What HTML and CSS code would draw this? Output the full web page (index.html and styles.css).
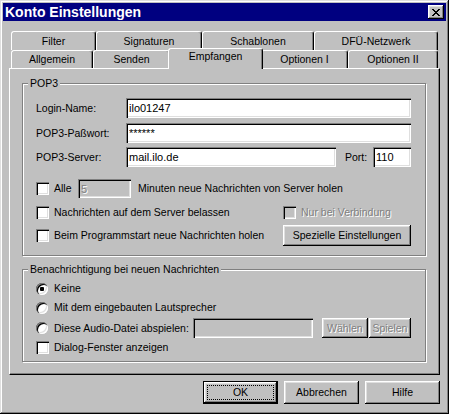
FILE: index.html
```html
<!DOCTYPE html>
<html lang="de">
<head>
  <meta charset="UTF-8" />
  <title>Konto Einstellungen</title>
  <link rel="stylesheet" href="styles.css">
</head>
<body>

  <div class="window">
    <div class="titlebar">
      <span class="title">Konto Einstellungen</span>
      <button type="button" class="close" aria-label="Schließen">
        <svg width="8" height="7" viewBox="0 0 8 7" shape-rendering="crispEdges">
          <rect x="0" y="0" width="2" height="1"/><rect x="6" y="0" width="2" height="1"/>
          <rect x="1" y="1" width="2" height="1"/><rect x="5" y="1" width="2" height="1"/>
          <rect x="2" y="2" width="4" height="1"/>
          <rect x="3" y="3" width="2" height="1"/>
          <rect x="2" y="4" width="4" height="1"/>
          <rect x="1" y="5" width="2" height="1"/><rect x="5" y="5" width="2" height="1"/>
          <rect x="0" y="6" width="2" height="1"/><rect x="6" y="6" width="2" height="1"/>
        </svg>
      </button>
    </div>

    <div class="sheet">
      <div class="tabs">
        <div class="tab-row back">
          <div class="tab tab-filter">Filter</div>
          <div class="tab tab-signaturen">Signaturen</div>
          <div class="tab tab-schablonen">Schablonen</div>
          <div class="tab tab-dfue">DFÜ-Netzwerk</div>
        </div>
        <div class="tab-row front">
          <div class="tab tab-allgemein">Allgemein</div>
          <div class="tab tab-senden">Senden</div>
          <div class="tab tab-empfangen active">Empfangen</div>
          <div class="tab tab-opt1">Optionen I</div>
          <div class="tab tab-opt2">Optionen II</div>
        </div>
      </div>

      <div class="panel">
        <div class="group">
          <div class="group-title">POP3</div>

          <div class="field">
            <label class="field-label" for="login">Login-Name:</label>
            <input class="edit" id="login" type="text" value="ilo01247">
          </div>
          <div class="field">
            <label class="field-label" for="pass">POP3-Paßwort:</label>
            <input class="edit" id="pass" type="text" value="******">
          </div>
          <div class="field field-server">
            <label class="field-label" for="server">POP3-Server:</label>
            <input class="edit edit-server" id="server" type="text" value="mail.ilo.de">
            <label class="port-label" for="port">Port:</label>
            <input class="edit edit-port" id="port" type="text" value="110">
          </div>

          <div class="row row-interval">
            <input type="checkbox" class="check">
            <span class="alle">Alle</span>
            <input class="edit edit-minutes" type="text" value="5" readonly>
            <span class="minutes">Minuten neue Nachrichten von Server holen</span>
          </div>

          <div class="row row-keep">
            <label class="option grow"><input type="checkbox" class="check">Nachrichten auf dem Server belassen</label>
            <label class="option side disabled"><input type="checkbox" class="check">Nur bei Verbindung</label>
          </div>

          <div class="row row-start">
            <label class="option grow"><input type="checkbox" class="check">Beim Programmstart neue Nachrichten holen</label>
            <button type="button" class="btn side">Spezielle Einstellungen</button>
          </div>
        </div>

        <div class="group group-notify">
          <div class="group-title">Benachrichtigung bei neuen Nachrichten</div>

          <label class="option radio-row first"><input type="radio" name="notify" class="radio" checked>Keine</label>
          <label class="option radio-row"><input type="radio" name="notify" class="radio">Mit dem eingebauten Lautsprecher</label>
          <div class="row row-audio">
            <label class="option"><input type="radio" name="notify" class="radio"><span class="audio-text">Diese Audio-Datei abspielen:</span></label>
            <input class="edit edit-audio" type="text" value="">
            <button type="button" class="btn btn-small btn-waehlen disabled">Wählen</button>
            <button type="button" class="btn btn-small btn-spielen disabled">Spielen</button>
          </div>
          <label class="option row-dialog"><input type="checkbox" class="check">Dialog-Fenster anzeigen</label>
        </div>
      </div>

      <div class="actions">
        <button type="button" class="btn btn-action btn-default">OK</button>
        <button type="button" class="btn btn-action">Abbrechen</button>
        <button type="button" class="btn btn-action">Hilfe</button>
      </div>
    </div>
  </div>

</body>
</html>
```

FILE: styles.css
```css
body {
  margin: 0;
  font-family: "Liberation Sans", Arial, sans-serif;
  font-size: 10.5px;
  line-height: 13px;
  color: #000;
  background: #c0c0c0;
}

.window {
  width: 449px;
  height: 414px;
  box-sizing: border-box;
  padding: 3px;
  background: #c0c0c0;
  box-shadow: inset -1px -1px #000, inset 1px 1px #dfdfdf, inset -2px -2px #808080, inset 2px 2px #fff;
}

/* title bar */

.titlebar {
  height: 18px;
  background: #000080;
  display: flex;
  align-items: center;
  justify-content: space-between;
  padding: 0 2px;
}

.title {
  color: #fff;
  font-weight: bold;
  font-size: 14px;
  line-height: 18px;
}

.close {
  width: 16px;
  height: 14px;
  padding: 0;
  border: 0;
  background: #c0c0c0;
  display: flex;
  align-items: center;
  justify-content: center;
  box-shadow: inset -1px -1px #000, inset 1px 1px #fff, inset -2px -2px #808080, inset 2px 2px #dfdfdf;
}

.close svg {
  fill: #000;
  margin-left: -1px;
}

/* tabs */

.sheet {
  margin: 10px 6px 0;
}

.tabs {
  padding-left: 2px;
}

.tab-row {
  display: flex;
  align-items: flex-start;
}

.tab {
  box-sizing: border-box;
  height: 19px;
  border: 1px solid;
  border-bottom: 0;
  border-color: #fff #000 transparent #fff;
  border-radius: 3px 3px 0 0;
  box-shadow: inset -1px 0 #808080;
  background: #c0c0c0;
  display: flex;
  align-items: center;
  justify-content: center;
  white-space: nowrap;
}

.front .tab {
  height: 18px;
}

.front .tab.active {
  height: 21px;
  margin: -2px -2px -1px;
  align-items: flex-start;
  padding-top: 1px;
  position: relative;
  z-index: 1;
}

.tab-filter { width: 85px; }
.tab-signaturen { width: 106px; }
.tab-schablonen { width: 112px; }
.tab-dfue { width: 124px; }

.tab-allgemein { width: 82px; }
.tab-senden { width: 77px; }
.front .tab-empfangen { width: 95px; }
.tab-opt1 { width: 87px; }
.tab-opt2 { width: 90px; }

/* panel */

.panel {
  height: 307px;
  box-sizing: border-box;
  border: 1px solid;
  border-color: #fff #000 #000 #fff;
  box-shadow: inset -1px -1px #808080;
  padding: 14px 13px 0 12px;
}

.group {
  border: 1px solid #808080;
  box-shadow: inset 1px 1px #fff, 1px 1px #fff;
  padding: 0 14px 9px 13px;
}

.group-notify {
  margin-top: 13px;
  padding-bottom: 7px;
}

.group-title {
  width: max-content;
  margin: -7px 0 0 -8px;
  padding: 0 2px;
  background: #c0c0c0;
}

/* fields */

.field {
  display: flex;
  align-items: center;
  height: 20px;
  margin-top: 5px;
}

.group-title + .field {
  margin-top: 8px;
}

.field-server {
  margin-top: 4px;
}

.field-label {
  width: 90px;
  flex: none;
}

.edit {
  flex: 1;
  min-width: 0;
  height: 20px;
  box-sizing: border-box;
  margin: 0;
  padding: 0 3px;
  border: 0;
  outline: none;
  font: inherit;
  font-size: 11px;
  color: #000;
  background: #fff;
  box-shadow: inset 1px 1px #808080, inset 2px 2px #000, inset -1px -1px #fff, inset -2px -2px #dfdfdf;
}

.edit-server {
  flex: none;
  width: 210px;
}

.port-label {
  margin-left: 9px;
}

.edit-port {
  flex: none;
  width: 38px;
  margin-left: auto;
}

.edit-minutes {
  flex: none;
  width: 53px;
  height: 19px;
  background: #c0c0c0;
  color: #808080;
  text-shadow: 1px 1px #fff;
}

.edit-audio {
  flex: none;
  width: 120px;
  background: #c0c0c0;
}

/* check rows */

.row {
  display: flex;
  align-items: center;
}

.row-interval {
  height: 19px;
  margin-top: 12px;
}

.row-keep {
  height: 13px;
  margin-top: 8px;
}

.row-start {
  height: 21px;
  margin-top: 6px;
}

.alle {
  width: 24px;
  margin-left: 5px;
}

.minutes {
  margin-left: 7px;
  white-space: nowrap;
}

.option {
  display: flex;
  align-items: center;
  gap: 5px;
  white-space: nowrap;
}

.grow {
  flex: 1;
}

.side {
  flex: none;
  width: 128px;
}

.row-start .side {
  height: 21px;
}

.check,
.radio {
  appearance: none;
  flex: none;
  margin: 0;
  width: 13px;
  height: 13px;
  background: #fff;
  box-shadow: inset 1px 1px #808080, inset 2px 2px #000, inset -1px -1px #fff, inset -2px -2px #dfdfdf;
}

.radio {
  width: 12px;
  height: 12px;
  border-radius: 50%;
  margin-right: 1px;
}

.radio:checked {
  background: radial-gradient(circle, #000 0 2px, #fff 2.5px);
}

.disabled {
  color: #808080;
  text-shadow: 1px 1px #fff;
}

.disabled .check {
  background: #c0c0c0;
}

.radio-row {
  height: 13px;
  margin-top: 6px;
}

.row-audio {
  height: 20px;
  margin-top: 4px;
}

.audio-text {
  width: 139px;
}

.row-dialog {
  height: 13px;
  margin-top: 3px;
}

/* buttons */

.btn {
  box-sizing: border-box;
  margin: 0;
  padding: 0;
  border: 0;
  font: inherit;
  color: #000;
  background: #c0c0c0;
  white-space: nowrap;
  box-shadow: inset -1px -1px #000, inset 1px 1px #fff, inset -2px -2px #808080, inset 2px 2px #dfdfdf;
}

.btn.disabled {
  color: #808080;
}

.btn-small {
  height: 20px;
}

.btn-waehlen {
  width: 50px;
  margin-left: 9px;
}

.btn-spielen {
  width: 46px;
  margin-left: 1px;
}

.actions {
  display: flex;
  justify-content: flex-end;
  gap: 6px;
  margin-top: 6px;
}

.btn-action {
  width: 75px;
  height: 23px;
}

.btn-default {
  border: 1px solid #000;
  outline: 1px dotted #000;
  outline-offset: -5px;
}
```
